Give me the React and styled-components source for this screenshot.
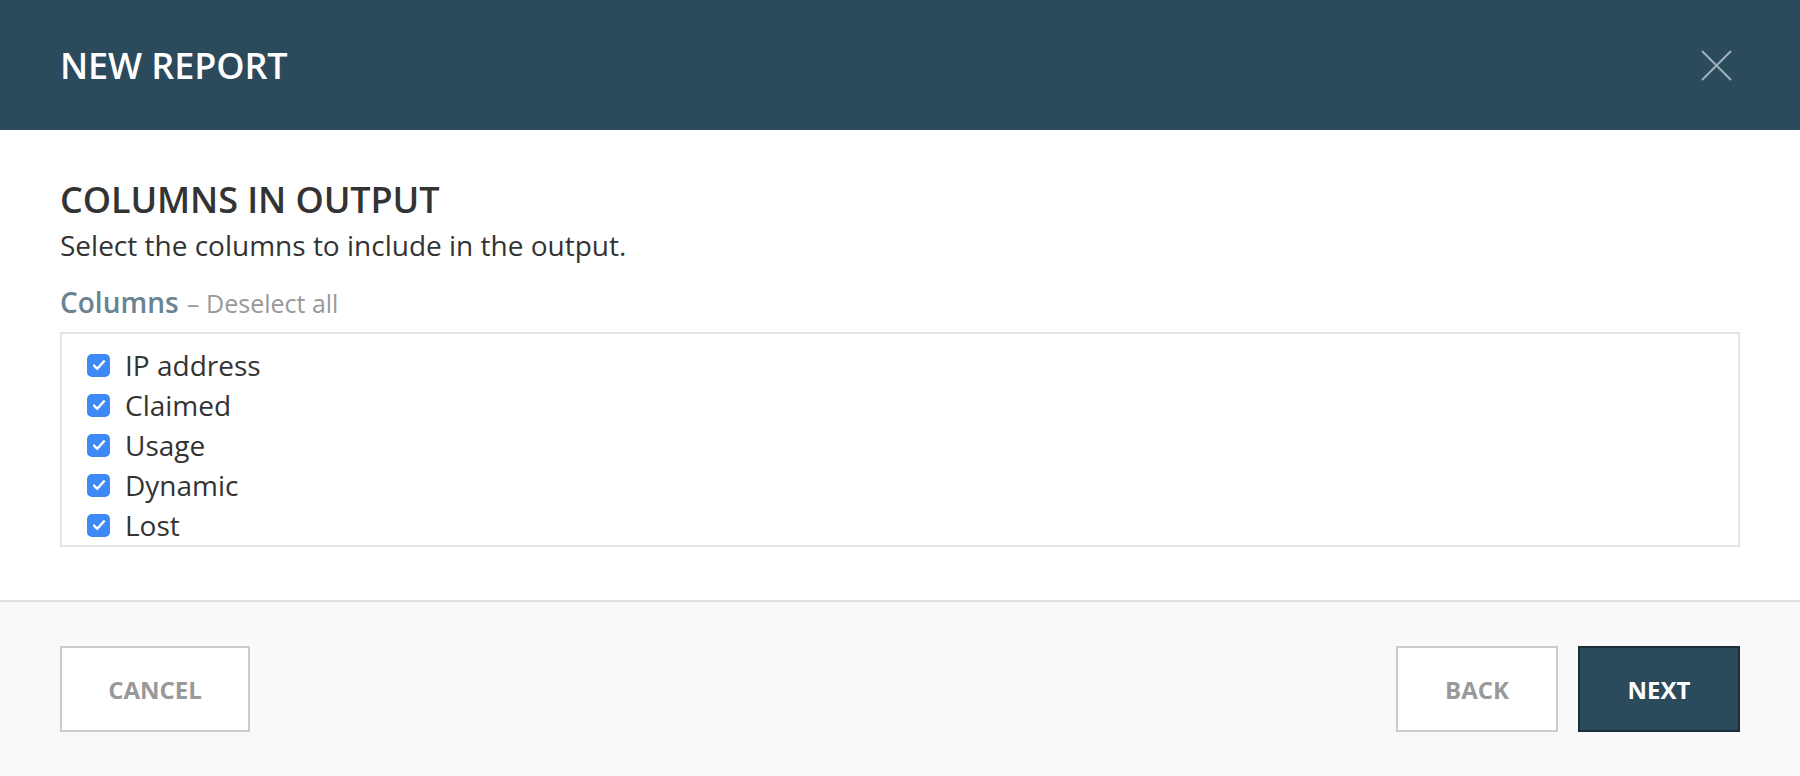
import React from "react";
import styled, { createGlobalStyle } from "styled-components";

const Global = createGlobalStyle`
  html, body { margin: 0; padding: 0; background: #ffffff; }
  body { font-family: "Open Sans", "Noto Sans", sans-serif; color: #333333; }
  * { box-sizing: border-box; }
`;

const Dialog = styled.div`
  width: 1800px;
  min-height: 776px;
  display: flex;
  flex-direction: column;
  background: #ffffff;
`;

const Header = styled.header`
  height: 130px;
  background: #2b4a5c;
  display: flex;
  align-items: center;
  justify-content: space-between;
  padding: 0 60px;
`;

const Title = styled.h1`
  margin: 0;
  font-size: 36px;
  font-weight: 600;
  color: #ffffff;
  letter-spacing: -0.1px;
`;

const Close = styled.button`
  width: 32px;
  height: 32px;
  margin-right: 8px;
  padding: 0;
  border: none;
  background: transparent;
  display: flex;
  align-items: center;
  justify-content: center;
  cursor: pointer;
`;

const Body = styled.section`
  padding: 48px 60px 53px;
  display: flex;
  flex-direction: column;
`;

const Heading = styled.h2`
  margin: 0;
  font-size: 36px;
  line-height: 44px;
  font-weight: 600;
  color: #333333;
  letter-spacing: -0.1px;
`;

const Subtitle = styled.p`
  margin: 3px 0 0;
  font-size: 28px;
  line-height: 40px;
  color: #333333;
`;

const FieldLabel = styled.div`
  margin-top: 20px;
  height: 36px;
  font-size: 25px;
  line-height: 36px;
  color: #999999;
`;

const FieldName = styled.span`
  color: #6a8391;
  font-size: 28px;
  line-height: 30px;
  font-weight: 600;
  margin-right: 2px;
`;

const ListBox = styled.div`
  margin-top: 11px;
  border: 2px solid #e4e4e4;
  padding: 11px 25px 0;
  display: flex;
  flex-direction: column;
`;

const Row = styled.label`
  height: 40px;
  display: flex;
  align-items: center;
  gap: 15px;
  font-size: 28px;
  color: #333333;
`;

const Box = styled.span`
  width: 23px;
  height: 23px;
  border-radius: 5px;
  background: ${(p) => (p.checked ? "#3d8af7" : "#ffffff")};
  display: flex;
  align-items: center;
  justify-content: center;
  flex-shrink: 0;
`;

const Footer = styled.footer`
  border-top: 2px solid #e2e2e2;
  background: #f9f9f9;
  padding: 44px 60px;
  display: flex;
  justify-content: space-between;
  flex: 1;
`;

const Group = styled.div`
  display: flex;
  gap: 20px;
`;

const Button = styled.button`
  height: 86px;
  width: ${(p) => p.w}px;
  border: 2px solid ${(p) => (p.primary ? "#1b2f3b" : "#cccccc")};
  background: ${(p) => (p.primary ? "#2b4a5c" : "#ffffff")};
  color: ${(p) => (p.primary ? "#ffffff" : "#999999")};
  font-family: "Open Sans", "Noto Sans", sans-serif;
  font-size: 24px;
  font-weight: 700;
  cursor: pointer;
`;

const columns = ["IP address", "Claimed", "Usage", "Dynamic", "Lost"];

export default function App() {
  return (
    <>
      <Global />
      <Dialog>
        <Header>
          <Title>NEW REPORT</Title>
          <Close aria-label="Close">
            <svg width="31" height="31" viewBox="0 0 31 31">
              <path d="M1 1 L30 30 M30 1 L1 30" stroke="#9fb0bb" strokeWidth="2" fill="none" />
            </svg>
          </Close>
        </Header>
        <Body>
          <Heading>COLUMNS IN OUTPUT</Heading>
          <Subtitle>Select the columns to include in the output.</Subtitle>
          <FieldLabel>
            <FieldName>Columns</FieldName> – Deselect all
          </FieldLabel>
          <ListBox>
            {columns.map((c) => (
              <Row key={c}>
                <Box checked>
                  <svg width="14" height="12" viewBox="0 0 14 12">
                    <path d="M2 6.5 L5.3 9.8 L12 2.3" stroke="#ffffff" strokeWidth="2.4" fill="none" strokeLinecap="round" strokeLinejoin="round" />
                  </svg>
                </Box>
                {c}
              </Row>
            ))}
          </ListBox>
        </Body>
        <Footer>
          <Button w={190}>CANCEL</Button>
          <Group>
            <Button w={162}>BACK</Button>
            <Button w={162} primary>NEXT</Button>
          </Group>
        </Footer>
      </Dialog>
    </>
  );
}
